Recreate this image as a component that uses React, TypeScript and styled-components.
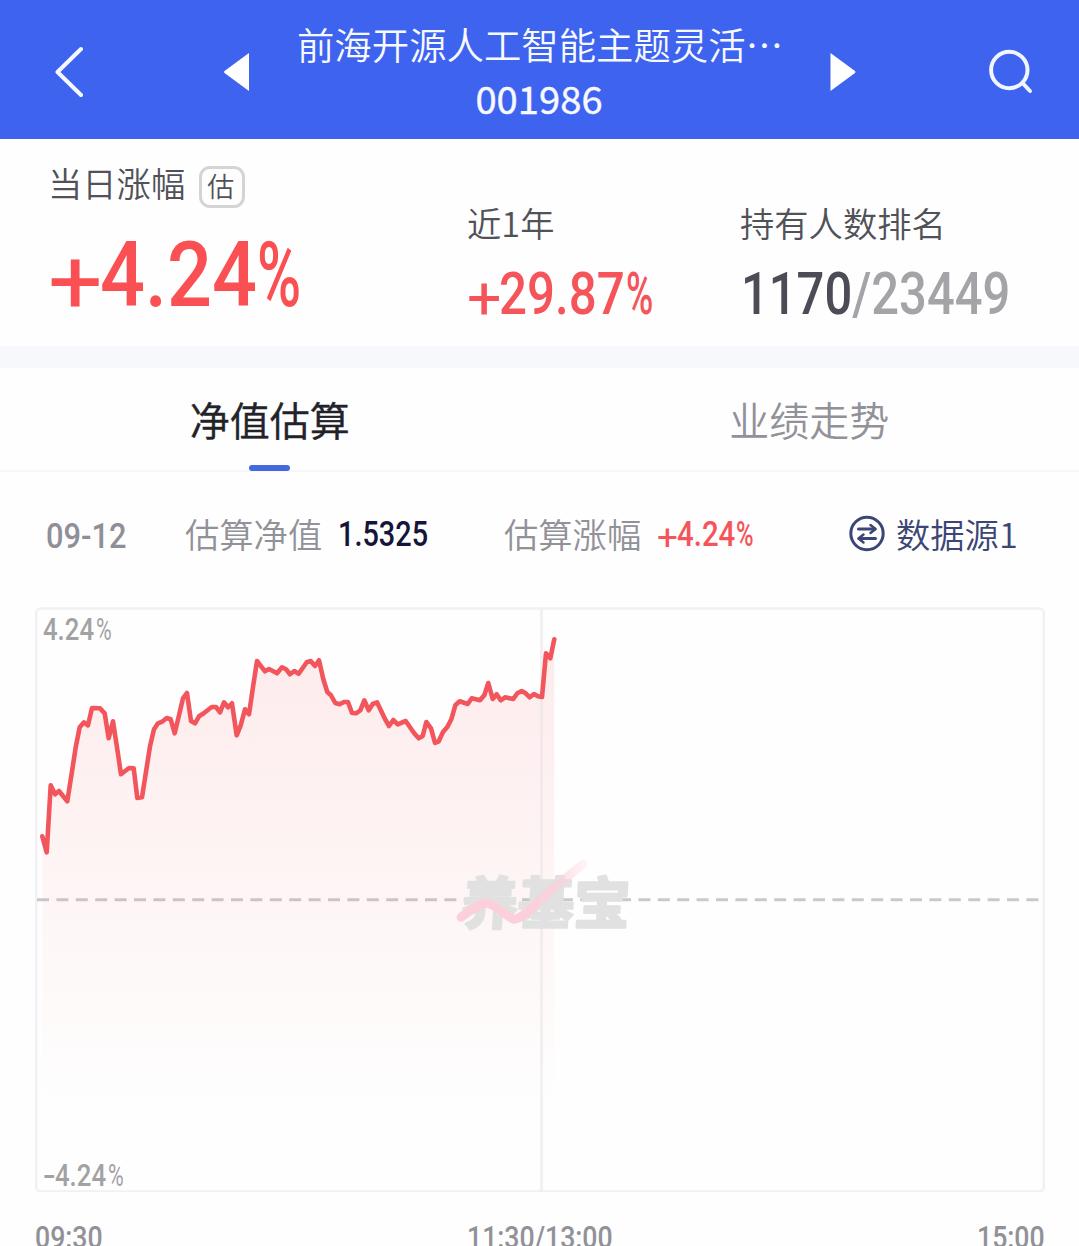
import React from "react";
import styled, { createGlobalStyle } from "styled-components";

const GlobalStyle = createGlobalStyle`
  * { box-sizing: border-box; }
  body {
    margin: 0;
    background: #fff;
    font-family: "Noto Sans CJK SC", sans-serif;
    overflow: hidden;
  }
`;

const Page = styled.main`
  width: 1079px;
  height: 1246px;
  overflow: hidden;
  background: #fefefe;
  display: flex;
  flex-direction: column;
`;

const Header = styled.header`
  flex: none;
  height: 139px;
  background: #3e63ee;
  color: #f6f9ff;
  display: grid;
  grid-template-columns: 139px 112px 1fr 112px 137px;
  align-items: center;
`;

const IconCell = styled.div<{ $align?: string; $pad?: string }>`
  display: flex;
  justify-content: ${(p) => p.$align ?? "center"};
  padding: ${(p) => p.$pad ?? "0"};
  svg { display: block; flex: none; }
`;

const Title = styled.div`
  display: flex;
  flex-direction: column;
  align-items: center;
  white-space: nowrap;
  padding: 2px 3px 0 0;
`;

const FundName = styled.div`
  font-size: 37.4px;
  line-height: 54px;
  font-weight: 350;
  padding-left: 2px;
`;

const FundCode = styled.div`
  font-size: 38.2px;
  line-height: 54px;
  -webkit-text-stroke: 0.4px #f6f9ff;
`;

const Stats = styled.section`
  flex: none;
  height: 207px;
  display: grid;
  grid-template-columns: 419px 273px 1fr;
  padding-left: 48px;
`;

const Stat = styled.div<{ $top: number }>`
  display: flex;
  flex-direction: column;
  padding-top: ${(p) => p.$top}px;
`;

const Label = styled.div<{ $color?: string }>`
  display: flex;
  align-items: center;
  font-size: 34.3px;
  line-height: 50px;
  height: 50px;
  white-space: nowrap;
  font-weight: 350;
  color: ${(p) => p.$color ?? "#515158"};
`;

const Badge = styled.span`
  width: 46px;
  height: 42px;
  margin: 9px 0 0 14px;
  padding-right: 3px;
  border: 3px solid #d4d4d6;
  border-radius: 11px;
  font-size: 27px;
  line-height: 34px;
  text-align: center;
`;

const Num = styled.span<{ $size: number; $stretch: number; $color: string }>`
  display: inline-block;
  font-family: Roboto, "Liberation Sans", sans-serif;
  font-size: ${(p) => p.$size}px;
  font-weight: 500;
  line-height: 1;
  color: ${(p) => p.$color};
  white-space: nowrap;
  transform: scaleX(${(p) => p.$stretch});
  transform-origin: left center;
`;

const Percent = styled.span<{ $size: number; $color: string }>`
  display: inline-flex;
  font-family: Roboto, "Liberation Sans", sans-serif;
  font-size: ${(p) => p.$size}px;
  font-weight: 500;
  line-height: 1;
  color: ${(p) => p.$color};
  white-space: nowrap;
`;

const Part = styled.span<{ $w: number; $sx: number; $dy?: number; $weight?: number }>`
  display: block;
  flex: none;
  width: ${(p) => p.$w}em;
  font-weight: ${(p) => p.$weight ?? 500};
  transform: translateY(${(p) => p.$dy ?? 0}em) scaleX(${(p) => p.$sx});
  transform-origin: left center;
`;

const ValueLine = styled.div<{ $top: number; $left?: number }>`
  padding: ${(p) => p.$top}px 0 0 ${(p) => p.$left ?? 0}px;
  line-height: 1;
  display: flex;
`;

const Muted = styled.span`
  color: #a3a3a8;
`;

const Band = styled.div`
  flex: none;
  height: 22px;
  background: #f7f8fc;
`;

const Tabs = styled.nav`
  flex: none;
  height: 104px;
  display: grid;
  grid-template-columns: 1fr 1fr;
  border-bottom: 2px solid #f7f7f9;
`;

const Tab = styled.div<{ $active?: boolean }>`
  display: flex;
  flex-direction: column;
  align-items: center;
  justify-content: space-between;
  padding-top: 21px;
  margin-bottom: -1px;
  font-size: 40px;
  line-height: 60px;
  font-weight: 350;
  color: ${(p) => (p.$active ? "#222229" : "#919198")};
  -webkit-text-stroke: ${(p) => (p.$active ? "0.5px #222229" : "0")};
  &::after {
    content: "";
    width: 41px;
    height: 6px;
    border-radius: 3px;
    background: ${(p) => (p.$active ? "#4468dd" : "transparent")};
  }
`;

const Info = styled.section`
  flex: none;
  height: 135px;
  padding: 36px 0 0 46px;
  display: grid;
  grid-template-columns: 139px 153px 166px 153px 191px 48px 1fr;
  align-items: center;
  align-content: start;
`;

const Lower = styled.div<{ $y: number }>`
  display: flex;
  padding-top: ${(p) => p.$y}px;
`;

const ChartBox = styled.section`
  flex: none;
  width: 1010px;
  height: 585px;
  margin-left: 35px;
  display: grid;
  > * { grid-area: 1 / 1; }
  svg { display: block; }
`;

const Scale = styled.div`
  display: flex;
  flex-direction: column;
  justify-content: space-between;
  align-items: flex-start;
  padding: 7px 8px 1px;
`;

const TimeAxis = styled.footer`
  display: grid;
  grid-template-columns: 432px 1fr 68px;
  padding: 30px 34px 0 35px;
`;

const points: [number, number][] = [
  [42.3, 836], [46.7, 852], [50.7, 785], [55, 794], [59, 790.7], [67.3, 801],
  [71.7, 773], [75.7, 747], [79.7, 727], [84, 722], [88, 725], [92, 707.7],
  [100, 708], [104.7, 713], [108.7, 738], [113, 721], [117, 747], [121, 774],
  [129, 767.7], [133.7, 768], [137.3, 797.7], [142, 797], [146.7, 767], [150, 746],
  [154, 729], [158, 723], [162.7, 721], [166.7, 717.7], [170.7, 719], [174.7, 733],
  [179, 715], [183, 698], [187, 692.7], [191, 720.7], [195, 723], [199, 716],
  [203.7, 713], [211.7, 706.7], [216, 706.7], [220, 712], [224, 702], [228, 707],
  [232, 703], [236.7, 735], [240.7, 725], [245, 709], [249, 714], [253, 686.7],
  [257, 660.7], [265, 671], [269, 668.7], [277, 673], [282, 667], [286, 669],
  [290, 674], [294.3, 670.7], [298.7, 673.5], [302.7, 667.7], [306.7, 662], [310.7, 660.7],
  [315, 665.7], [319, 660], [323.3, 679], [327.3, 691.7], [331, 695], [335.3, 702.7],
  [339.7, 704], [344, 701.7], [348, 701.7], [352, 712.7], [356, 713], [360.3, 710],
  [364.3, 700], [368.7, 710], [372.7, 703.7], [377, 702], [385, 718.7], [389, 725.7],
  [393.3, 719.7], [397.7, 724], [405.7, 720.7], [414, 732.7], [418.7, 738], [422.7, 735.7],
  [426.3, 721.7], [431, 728], [435, 742.7], [438.7, 741], [443, 731.7], [447.3, 726.7],
  [451.3, 719], [455.3, 705], [459.7, 701], [467.7, 703.7], [471.7, 698], [480, 700],
  [484.3, 695], [488.3, 682.7], [492.7, 698.7], [496.7, 694], [500.7, 700], [505, 697],
  [513.3, 698.7], [517.3, 693], [521.7, 690.7], [525.7, 693], [529.7, 697], [534, 693.7],
  [538, 696], [542, 696.7], [546, 653], [550.3, 658], [554.3, 639],
];

const linePath = "M" + points.map((p) => p.join(" ")).join("L");
const areaPath = linePath + "L554.3 1110L42.3 1110Z";

const Chart = () => (
  <svg width="1010" height="585" viewBox="35 606.7 1010 585">
    <defs>
      <linearGradient id="fall" x1="0" y1="639" x2="0" y2="1110" gradientUnits="userSpaceOnUse">
        <stop offset="0" stopColor="#f9494e" stopOpacity="0.105" />
        <stop offset="1" stopColor="#f9494e" stopOpacity="0" />
      </linearGradient>
      <linearGradient id="tick" x1="540" y1="0" x2="590" y2="0" gradientUnits="userSpaceOnUse">
        <stop offset="0" stopColor="#fcd0da" />
        <stop offset="1" stopColor="#fcd0da" stopOpacity="0.15" />
      </linearGradient>
    </defs>
    <rect x="36.2" y="608.2" width="1007.600" height="583" rx="5" fill="none" stroke="#f1f1f4" strokeWidth="2.600" />
    <path d="M37 899.500H1040" stroke="#c9c9cb" strokeWidth="3" strokeDasharray="12 7.400" />
    <path d={areaPath} fill="url(#fall)" />
    <text
      transform="translate(461 923.5) skewX(-3)"
      fontFamily="Noto Sans CJK SC, sans-serif"
      fontSize="56"
      fontWeight="700"
      fill="#e1e1e1"
      stroke="#e1e1e1"
      strokeWidth="2.800"
      strokeLinejoin="round"
    >
      养基宝
    </text>
    <path d="M461 917C470 910 478 904 486 903C495 903 504 915 514 919C524 918 537 902 546 894L583 864" fill="none" stroke="url(#tick)" strokeWidth="9" strokeLinecap="round" strokeLinejoin="round" />
    <path d="M541.500 609V1191" stroke="#e6dfe6" strokeOpacity="0.5" strokeWidth="2.600" />
    <path d={linePath} fill="none" stroke="#f2555b" strokeWidth="4.600" strokeLinejoin="round" strokeLinecap="round" />
  </svg>
);

export default function App() {
  return (
    <Page>
      <GlobalStyle />
      <Header>
        <IconCell $pad="5px 0 0 0">
          <svg width="30" height="54" viewBox="0 0 30 54" fill="none" stroke="#f6f9ff" strokeWidth="4" strokeLinecap="round" strokeLinejoin="round">
            <path d="M26 4L2.500 27L26 50" />
          </svg>
        </IconCell>
        <IconCell $align="flex-end" $pad="5px 1px 0 0">
          <svg width="27" height="40" viewBox="0 0 27 40"><path d="M1.500 19Q0.500 20 1.500 21L26 39V1Z" fill="#fff" /></svg>
        </IconCell>
        <Title>
          <FundName>前海开源人工智能主题灵活…</FundName>
          <FundCode>001986</FundCode>
        </Title>
        <IconCell $align="flex-start" $pad="5px 0 0 0">
          <svg width="27" height="40" viewBox="0 0 27 40"><path d="M25 19Q26 20 25 21L0.500 39V1Z" fill="#fff" /></svg>
        </IconCell>
        <IconCell $pad="5px 0 0 0">
          <svg width="46" height="46" viewBox="0 0 46 46" fill="none" stroke="#f0f5ff" strokeWidth="4" strokeLinecap="round">
            <circle cx="21.300" cy="21" r="18.200" />
            <path d="M35 34.500L42 42" />
          </svg>
        </IconCell>
      </Header>

      <Stats>
        <Stat $top={18}>
          <Label>当日涨幅<Badge>估</Badge></Label>
          <ValueLine $top={23}>
            <Percent $size={91} $color="#fa5054">
              <Part $w={0.57} $sx={1.06} $dy={0.08} $weight={400}>+</Part>
              <Part $w={1.73} $sx={0.87}>4.24</Part>
              <Part $w={0.5} $sx={0.66}>%</Part>
            </Percent>
          </ValueLine>
        </Stat>
        <Stat $top={58}>
          <Label>近1年</Label>
          <ValueLine $top={17}>
            <Percent $size={59} $color="#f4545a">
              <Part $w={0.55} $sx={1.03} $dy={0.09} $weight={400}>+</Part>
              <Part $w={2.14} $sx={0.835}>29.87</Part>
              <Part $w={0.5} $sx={0.63}>%</Part>
            </Percent>
          </ValueLine>
        </Stat>
        <Stat $top={58}>
          <Label>持有人数排名</Label>
          <ValueLine $top={17} $left={1}>
            <Num $size={59} $stretch={0.829} $color="#4c4c56">1170<Muted>/23449</Muted></Num>
          </ValueLine>
        </Stat>
      </Stats>
      <Band />
      <Tabs>
        <Tab $active>净值估算</Tab>
        <Tab>业绩走势</Tab>
      </Tabs>

      <Info>
        <Lower $y={7}><Num $size={35} $stretch={0.88} $color="#8f8f97">09-12</Num></Lower>
        <Label $color="#919198">估算净值</Label>
        <Lower $y={2}><Num $size={35} $stretch={0.825} $color="#15153a">1.5325</Num></Lower>
        <Label $color="#919198">估算涨幅</Label>
        <Lower $y={2}>
          <Percent $size={35} $color="#f4545a">
            <Part $w={0.57} $sx={1.05} $dy={0.08} $weight={400}>+</Part>
            <Part $w={1.68} $sx={0.84}>4.24</Part>
            <Part $w={0.5} $sx={0.68}>%</Part>
          </Percent>
        </Lower>
        <svg width="38" height="38" viewBox="0 0 38 38" fill="none" stroke="#3c4675" strokeWidth="3" strokeLinecap="round" strokeLinejoin="round">
          <circle cx="19" cy="19.500" r="16.200" />
          <path d="M10.500 15H27M11 24.500H27.500" />
          <path d="M22.500 11L27.500 15L22.500 19M15.500 20.500L10.500 24.500L15.500 28.500" strokeWidth="2.500" />
        </svg>
        <Label $color="#3c4675">数据源1</Label>
      </Info>

      <ChartBox>
        <Chart />
        <Scale>
          <Percent $size={31} $color="#a2a2a5">
            <Part $w={1.7} $sx={0.83}>4.24</Part>
            <Part $w={0.5} $sx={0.69} $weight={400}>%</Part>
          </Percent>
          <Percent $size={31} $color="#a2a2a5">
            <Part $w={0.4} $sx={1.2}>-</Part>
            <Part $w={1.7} $sx={0.83}>4.24</Part>
            <Part $w={0.5} $sx={0.69} $weight={400}>%</Part>
          </Percent>
        </Scale>
      </ChartBox>
      <TimeAxis>
        <Num $size={31} $stretch={0.86} $color="#919198">09:30</Num>
        <Num $size={31} $stretch={0.86} $color="#919198">11:30/13:00</Num>
        <Num $size={31} $stretch={0.86} $color="#919198">15:00</Num>
      </TimeAxis>
    </Page>
  );
}
